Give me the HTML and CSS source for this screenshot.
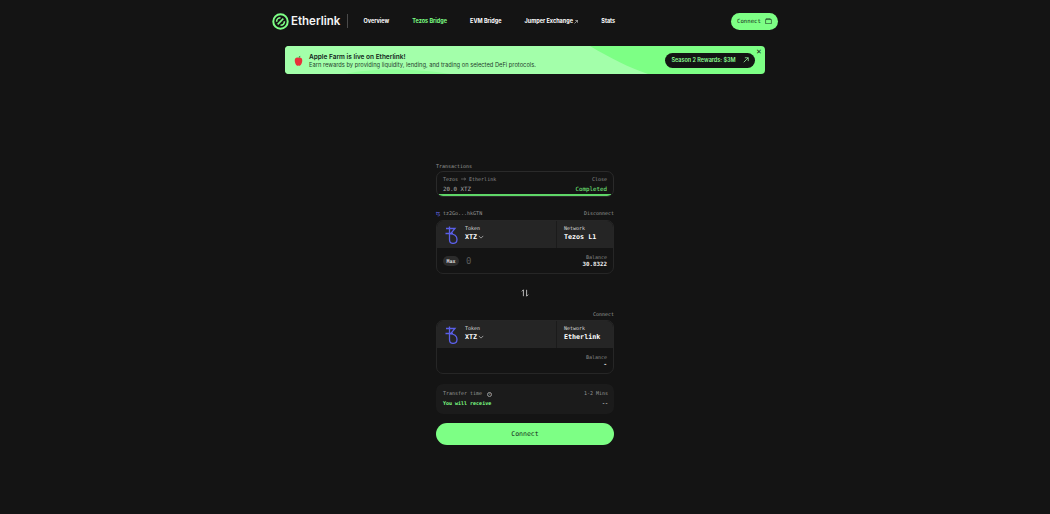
FILE: index.html
```html
<!DOCTYPE html>
<html lang="en">
<head>
<meta charset="utf-8">
<title>Etherlink Bridge</title>
<link rel="stylesheet" href="styles.css">
</head>
<body>
<header class="header">
  <div class="brand">
    <svg class="logo" viewBox="0 0 24 24" width="17" height="17" fill="none" stroke="#7dff85"><circle cx="12" cy="12" r="10.200" stroke-width="2.800"/><path d="M6.500 12.500C6.500 9 9 6.800 12 6.800M17.500 11.500C17.500 15 15 17.200 12 17.200M8 16 16 8" stroke-width="2.200"/></svg>
    <span class="brand-name">Etherlink</span>
  </div>
  <span class="divider"></span>
  <nav class="nav">
    <a class="nav-link">Overview</a>
    <a class="nav-link active">Tezos Bridge</a>
    <a class="nav-link">EVM Bridge</a>
    <a class="nav-link">Jumper Exchange <svg class="ext" viewBox="0 0 8 8" width="4" height="4" fill="none" stroke="#fff" stroke-width="1"><path d="M1 7 7 1M2.500 1H7V5.500"/></svg></a>
    <a class="nav-link">Stats</a>
  </nav>
  <button class="connect-top">Connect
    <svg viewBox="0 0 12 10" width="7" height="6" fill="none" stroke="#14281a" stroke-width="1"><path d="M1 2.500h10v7H1zM2 2.500V1h7v1.500"/></svg>
  </button>
</header>

<section class="banner">
  <svg class="banner-shape" viewBox="0 0 480 28" preserveAspectRatio="none"><path d="M0 28V0H305C325 12 345 22 363 28Z" fill="#a3ffaa"/><path d="M60 28C85 22 130 22 165 28Z" fill="#8fff98"/></svg>
  <div class="banner-copy">
    <svg class="apple" viewBox="0 0 12 14" width="9" height="11"><path d="M6 3.500C4 2.500 1 3 1 7s2.500 7 3.500 7c.8 0 1-.4 1.500-.4s.7.4 1.500.4C8.500 14 11 11 11 7S8 2.500 6 3.500Z" fill="#e8303a"/><path d="M6 3.500C6 2 7 .8 8.500.5 8.500 2 7.500 3.300 6 3.500Z" fill="#2f9e3e"/></svg>
    <div class="banner-lines">
      <div class="banner-title">Apple Farm is live on Etherlink!</div>
      <div class="banner-text">Earn rewards by providing liquidity, lending, and trading on selected DeFi protocols.</div>
    </div>
  </div>
  <button class="rewards">Season 2 Rewards: $3M
    <svg viewBox="0 0 8 8" width="6" height="6" fill="none" stroke="#a3ffaa" stroke-width="1"><path d="M1 7 7 1M2.500 1H7V5.500"/></svg>
  </button>
  <span class="banner-close">✕</span>
</section>

<main class="bridge">
  <div class="label-row"><span>Transactions</span></div>
  <div class="tx-card">
    <div class="tx-row"><span>Tezos <svg class="tx-arrow" viewBox="0 0 8 6" width="5" height="4" fill="none" stroke="#8d8d8d" stroke-width=".8"><path d="M0 3H7.500M5 1 7.500 3 5 5"/></svg> Etherlink</span><span>Close</span></div>
    <div class="tx-row tx-amount"><span>20.0 XTZ</span><span class="green">Completed</span></div>
    <div class="tx-bar"></div>
  </div>

  <div class="label-row wallet-row"><span><i class="purple">ꜩ</i> tz2Go...hkGTN</span><span>Disconnect</span></div>
  <div class="panel">
    <div class="panel-top">
      <div class="token">
        <svg class="tez" viewBox="0 0 14 18" width="14" height="18" fill="none" stroke="#5a5fe8" stroke-width="1.300"><path d="M2 2.500H11L6.500 7.800C10 7.800 13 10 13 13.200 13 15.700 11.200 17.400 9 17.400 6.800 17.400 5.500 16 5.500 13.500V.5M1.500 7.500H9"/></svg>
        <div><div class="cell-label">Token</div><div class="cell-value">XTZ <svg class="chev" viewBox="0 0 8 5" width="6" height="4" fill="none" stroke="#bbb" stroke-width="1"><path d="M1 1 4 4 7 1"/></svg></div></div>
      </div>
      <div class="network"><div class="cell-label">Network</div><div class="cell-value">Tezos L1</div></div>
    </div>
    <div class="panel-bottom">
      <div class="amount"><span class="max">Max</span><span class="zero">0</span></div>
      <div class="balance"><div class="bal-label">Balance</div><div class="bal-value">30.8322</div></div>
    </div>
  </div>

  <div class="swap">
    <svg viewBox="0 0 10 10" width="8" height="8" fill="none" stroke="#ddd" stroke-width="1"><path d="M3 9V1L1 3M7 1V9L9 7"/></svg>
  </div>

  <div class="label-row end"><span>Connect</span></div>
  <div class="panel">
    <div class="panel-top">
      <div class="token">
        <svg class="tez" viewBox="0 0 14 18" width="14" height="18" fill="none" stroke="#5a5fe8" stroke-width="1.300"><path d="M2 2.500H11L6.500 7.800C10 7.800 13 10 13 13.200 13 15.700 11.200 17.400 9 17.400 6.800 17.400 5.500 16 5.500 13.500V.5M1.500 7.500H9"/></svg>
        <div><div class="cell-label">Token</div><div class="cell-value">XTZ <svg class="chev" viewBox="0 0 8 5" width="6" height="4" fill="none" stroke="#bbb" stroke-width="1"><path d="M1 1 4 4 7 1"/></svg></div></div>
      </div>
      <div class="network"><div class="cell-label">Network</div><div class="cell-value">Etherlink</div></div>
    </div>
    <div class="panel-bottom">
      <div class="amount"></div>
      <div class="balance"><div class="bal-label">Balance</div><div class="bal-value">-</div></div>
    </div>
  </div>

  <div class="summary">
    <div class="sum-row"><span>Transfer time <span class="info">i</span></span><span>1-2 Mins</span></div>
    <div class="sum-row receive"><span>You will receive</span><span>--</span></div>
  </div>
  <button class="connect-main">Connect</button>
</main>
</body>
</html>
```
FILE: styles.css
```css
* { box-sizing: border-box; }
html, body { margin: 0; height: 100%; }
body { background: #141414; color: #fff; font-family: Inter, "Liberation Sans", sans-serif; overflow: hidden; }
button { border: 0; font: inherit; }
.header { height: 42px; padding-left: 272px; padding-right: 272px; display: flex; align-items: center; }
.brand { display: flex; align-items: center; gap: 2px; width: 67px; flex: none; }
.logo { flex: none; }
.brand-name { font-size: 11.500px; font-weight: 600; color: #f4f4f4; }
.divider { flex: none; width: 1px; height: 14px; background: #4a4a4a; margin-left: 8px; }
.nav { display: flex; align-items: center; gap: 23px; margin-left: 15.500px; flex: 1; }
.nav-link { font-size: 5.500px; font-weight: 700; color: #fff; white-space: nowrap; }
.nav-link.active { color: #7dff85; }
.ext { vertical-align: -0.5px; }
.connect-top { height: 17px; width: 47px; border-radius: 8.500px; background: #7dff85; color: #14281a; font-family: "DejaVu Sans Mono", monospace; font-size: 5.700px; display: flex; align-items: center; justify-content: center; gap: 4px; padding: 0; }

.banner { position: relative; width: 480px; height: 28px; margin: 4px 0 0 285px; border-radius: 4px; background: #7dff85; color: #123; display: flex; align-items: center; justify-content: space-between; padding: 0 10px; overflow: hidden; }
.banner-shape { position: absolute; inset: 0; width: 100%; height: 100%; }
.banner-copy { position: relative; display: flex; align-items: center; gap: 6px; }
.banner-lines { padding-top: 1px; }
.apple { margin-left: -1px; }
.banner-title { font-size: 6.500px; font-weight: 600; color: #12241a; line-height: 8px; }
.banner-text { font-size: 5.750px; color: #24402c; line-height: 8px; }
.rewards { position: relative; height: 15px; width: 90px; border-radius: 8px; background: #141414; color: #8dff95; font-size: 5.500px; font-weight: 600; display: flex; align-items: center; justify-content: center; gap: 7px; padding: 0; }
.banner-close { position: absolute; top: 2px; right: 3px; font-size: 7px; line-height: 8px; color: #14281a; }

.bridge { width: 178px; margin: 89px 0 0 436px; font-family: "DejaVu Sans Mono", monospace; }
.label-row { display: flex; justify-content: space-between; font-size: 5px; line-height: 6px; color: #9a9a9a; }
.label-row.end { justify-content: flex-end; }
.wallet-row { margin-top: 13px; height: 7px; }
.purple { color: #6a6ff0; font-style: normal; }
.tx-card { position: relative; height: 26px; margin-top: 2px; border: 1px solid #2a2a2a; border-radius: 7px; padding: 4px 6px 0; overflow: hidden; }
.tx-arrow { vertical-align: 0; }
.tx-row { display: flex; justify-content: space-between; font-size: 5px; line-height: 7px; color: #8d8d8d; }
.tx-amount { font-size: 5.800px; margin-top: 2px; line-height: 9px; color: #aaa; }
.green { color: #7dff85; }
.tx-bar { position: absolute; left: 2px; right: 2px; bottom: 0; height: 2px; background: #5fd668; }
.panel { margin-top: 3px; height: 54px; border: 1px solid #262626; border-radius: 7px; overflow: hidden; display: flex; flex-direction: column; }
.panel-top { height: 27px; background: #252525; display: flex; }
.token { width: 120px; display: flex; align-items: center; gap: 7px; padding-left: 7px; border-right: 1px solid #1b1b1b; }
.network { padding: 4px 0 0 7px; }
.token > div { margin-top: -3px; }
.cell-label { font-size: 5px; line-height: 7px; color: #ddd; }
.cell-value { font-size: 6.700px; line-height: 9px; margin-top: 1px; font-weight: 700; color: #fff; display: flex; align-items: center; gap: 1px; }
.panel-bottom { flex: 1; display: flex; justify-content: space-between; align-items: center; padding: 0 6px 0 6px; }
.amount { display: flex; align-items: center; gap: 7px; }
.max { background: #2c2c2c; border-radius: 5px; height: 10px; width: 16px; display: flex; align-items: center; justify-content: center; font-size: 5px; font-weight: 700; color: #ddd; }
.zero { font-size: 9px; color: #5a5a5a; }
.balance { text-align: right; }
.bal-label { font-size: 5px; line-height: 7px; color: #888; }
.bal-value { font-size: 5.800px; line-height: 7px; font-weight: 700; color: #eee; }
.swap { height: 37px; display: flex; align-items: center; justify-content: center; }
.summary { margin-top: 10px; height: 30px; background: #1b1b1b; border-radius: 7px; padding: 6px 6px 0 7px; }
.sum-row { display: flex; justify-content: space-between; font-size: 5px; line-height: 7px; color: #999; }
.receive { margin-top: 3px; color: #7dff85; font-weight: 700; }
.receive span:last-child { color: #aaa; }
.info { display: inline-flex; width: 5px; height: 5px; border: .6px solid #999; border-radius: 50%; align-items: center; justify-content: center; font-size: 3.500px; margin-left: 2px; }
.connect-main { display: block; width: 100%; height: 22px; margin-top: 9px; border-radius: 11px; background: #7dff85; color: #14281a; font-family: "DejaVu Sans Mono", monospace; font-size: 6.500px; font-weight: 400; padding: 0; }
```
